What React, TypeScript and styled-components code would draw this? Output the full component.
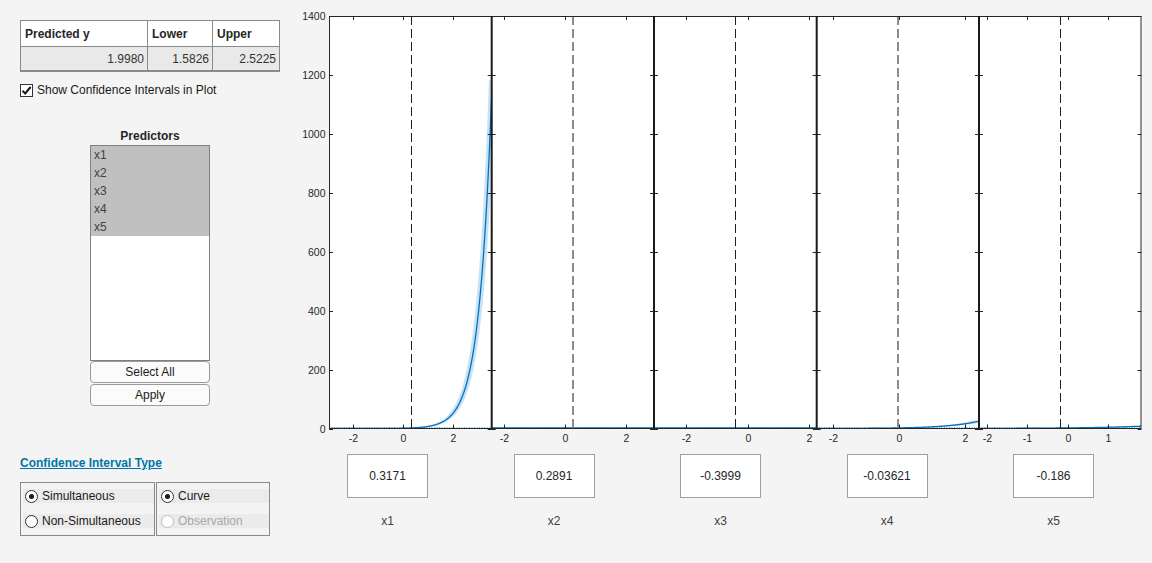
import React from 'react';
import styled, { createGlobalStyle } from 'styled-components';

const GlobalStyle = createGlobalStyle`
  html, body {
    margin: 0;
    padding: 0;
    background: #f4f4f4;
  }
  body {
    font-family: "Liberation Sans", Arial, sans-serif;
    font-size: 12px;
    color: #1a1a1a;
  }
`;

interface Panel {
  left: number;
  right: number;
  x0: number; // pixel of x = 0
  scale: number; // pixels per unit
  ticks: number[];
  dash: number;
  greyDash?: boolean;
  f: (x: number) => number;
}

const TOP = 16;
const BOTTOM = 428.5;
const YSCALE = (BOTTOM - TOP) / 1400;
const yPx = (v: number) => BOTTOM - v * YSCALE;

const panels: Panel[] = [
  { left: 329, right: 491.7, x0: 403, scale: 25, ticks: [-2, 0, 2], dash: 0.3171, f: (x) => 30 * Math.exp(2 * (x - 1.73)) },
  { left: 491.7, right: 654, x0: 564.5, scale: 30.5, ticks: [-2, 0, 2], dash: 0.2891, greyDash: true, f: () => 2 },
  { left: 654, right: 816.7, x0: 747.5, scale: 30.9, ticks: [-2, 0, 2], dash: -0.3999, f: () => 2 },
  { left: 816.7, right: 979, x0: 899, scale: 33, ticks: [-2, 0, 2], dash: -0.03621, greyDash: true, f: (x) => 2 * Math.exp(1.04 * x) },
  { left: 979, right: 1141.5, x0: 1067.7, scale: 40.5, ticks: [-2, -1, 0, 1], dash: -0.186, f: (x) => 2 * Math.exp(0.76 * x) },
];

const yTicks = [0, 200, 400, 600, 800, 1000, 1200, 1400];
const BAND = 1.3;

const samples = (p: Panel) => {
  const pts: number[] = [];
  for (let px = p.left; px <= p.right + 0.01; px += 0.5) pts.push(px);
  return pts;
};

const valueAt = (p: Panel, px: number) => p.f((px - p.x0) / p.scale);

const curvePath = (p: Panel) =>
  samples(p)
    .map((px, i) => `${i ? 'L' : 'M'}${px.toFixed(2)},${yPx(valueAt(p, px)).toFixed(2)}`)
    .join(' ');

const bandPath = (p: Panel) => {
  const pts = samples(p);
  const cap = valueAt(p, p.right) * 1.04;
  const up = pts.map((px, i) => `${i ? 'L' : 'M'}${px.toFixed(2)},${yPx(Math.min(valueAt(p, px) * BAND, cap)).toFixed(2)}`);
  const lo = [...pts].reverse().map((px) => `L${px.toFixed(2)},${yPx(valueAt(p, px) / BAND).toFixed(2)}`);
  return `${up.join(' ')} ${lo.join(' ')} Z`;
};

const SlicePlot = () => (
  <S.Plot width={862} height={450} viewBox="290 0 862 450">
    <defs>
      <clipPath id="plotClip">
        <rect x={329} y={TOP} width={1141.5 - 329} height={BOTTOM - TOP} />
      </clipPath>
    </defs>
    <rect x={329} y={TOP} width={1141.5 - 329} height={BOTTOM - TOP} fill="#fff" />
    <g clipPath="url(#plotClip)">
      {panels.map((p, i) => (
        <g key={i}>
          <path d={bandPath(p)} fill="#4d9be0" fillOpacity={0.3} stroke="none" />
          <path d={curvePath(p)} fill="none" stroke="#0072bd" strokeWidth={1.3} />
        </g>
      ))}
      <line x1={329} x2={1141.5} y1={yPx(1.998)} y2={yPx(1.998)} stroke="#0072bd" strokeWidth={1} strokeDasharray="1 1.5" />
    </g>
    {panels.map((p, i) => {
      const dx = Math.round(p.x0 + p.dash * p.scale) + (p.greyDash ? 0 : 0.5);
      return (
        <line
          key={`d${i}`}
          x1={dx}
          x2={dx}
          y1={TOP}
          y2={BOTTOM}
          stroke={p.greyDash ? '#8c8c8c' : '#1f1f1f'}
          strokeWidth={p.greyDash ? 2 : 1}
          strokeDasharray="9 4"
        />
      );
    })}
    {panels.map((p, i) =>
      p.ticks.map((t) => {
        const tx = Math.round(p.x0 + t * p.scale) + 0.5;
        return (
          <g key={`t${i}${t}`}>
            <line x1={tx} x2={tx} y1={TOP} y2={TOP + 4} stroke="#262626" />
            <line x1={tx} x2={tx} y1={BOTTOM} y2={BOTTOM - 4} stroke="#262626" />
            <S.Tick x={tx} y={441.5} textAnchor="middle">
              {t}
            </S.Tick>
          </g>
        );
      })
    )}
    {yTicks.map((v) => {
      const ty = Math.round(yPx(v)) + 0.5;
      return (
        <g key={`y${v}`}>
          <line x1={329} x2={333} y1={ty} y2={ty} stroke="#262626" />
          <line x1={1137.5} x2={1141.5} y1={ty} y2={ty} stroke="#262626" />
          {panels.slice(1).map((p, i) => (
            <line key={i} x1={p.left - 4} x2={p.left + 4} y1={ty} y2={ty} stroke="#262626" />
          ))}
          <S.Tick x={325.5} y={ty + 3.5} textAnchor="end">
            {v}
          </S.Tick>
        </g>
      );
    })}
    <rect x={329.5} y={16.5} width={1141 - 329.5} height={428.5 - 16.5} fill="none" stroke="#262626" strokeWidth={1} />
    {panels.slice(1).map((p, i) => (
      <line key={`b${i}`} x1={p.left} x2={p.left} y1={TOP} y2={BOTTOM} stroke="#1a1a1a" strokeWidth={2} />
    ))}
  </S.Plot>
);

const CheckMark = () => (
  <svg width="11" height="11" viewBox="0 0 11 11">
    <path d="M1.5 5.8 L4.2 8.5 L9.6 2" fill="none" stroke="#1a1a1a" strokeWidth={2} />
  </svg>
);

const Radio = ({ checked, disabled, label }: { checked?: boolean; disabled?: boolean; label: string }) => (
  <S.RadioRow $disabled={disabled}>
    <S.RadioCircle $disabled={disabled}>{checked && <S.RadioDot />}</S.RadioCircle>
    {label}
  </S.RadioRow>
);

const fields = [
  { value: '0.3171', name: 'x1' },
  { value: '0.2891', name: 'x2' },
  { value: '-0.3999', name: 'x3' },
  { value: '-0.03621', name: 'x4' },
  { value: '-0.186', name: 'x5' },
];

const App = () => {
  return (
    <>
      <GlobalStyle />
      <S.Page>
        <S.Side>
          <S.Table>
            <S.HeadCell>Predicted y</S.HeadCell>
            <S.HeadCell>Lower</S.HeadCell>
            <S.HeadCell $last>Upper</S.HeadCell>
            <S.DataCell>1.9980</S.DataCell>
            <S.DataCell>1.5826</S.DataCell>
            <S.DataCell $last>2.5225</S.DataCell>
          </S.Table>
          <S.CheckRow>
            <S.CheckBox>
              <CheckMark />
            </S.CheckBox>
            Show Confidence Intervals in Plot
          </S.CheckRow>
          <S.Predictors>
            <S.PredTitle>Predictors</S.PredTitle>
            <S.List>
              {['x1', 'x2', 'x3', 'x4', 'x5'].map((n) => (
                <S.ListItem key={n}>{n}</S.ListItem>
              ))}
            </S.List>
            <S.Button>Select All</S.Button>
            <S.Button $gap>Apply</S.Button>
          </S.Predictors>
          <S.Link>Confidence Interval Type</S.Link>
          <S.RadioGroups>
            <S.RadioBox $width={135}>
              <Radio checked label="Simultaneous" />
              <Radio label="Non-Simultaneous" />
            </S.RadioBox>
            <S.RadioBox $width={114}>
              <Radio checked label="Curve" />
              <Radio disabled label="Observation" />
            </S.RadioBox>
          </S.RadioGroups>
        </S.Side>
        <S.Main>
          <SlicePlot />
          <S.FieldRow>
            {fields.map((f) => (
              <S.Field key={f.name}>
                <S.ValueBox>{f.value}</S.ValueBox>
                <S.FieldLabel>{f.name}</S.FieldLabel>
              </S.Field>
            ))}
          </S.FieldRow>
        </S.Main>
      </S.Page>
    </>
  );
};

export default App;

const S = {
  Page: styled.div`
    width: 1152px;
    height: 563px;
    display: flex;
    background: #f4f4f4;
    overflow: hidden;
  `,
  Side: styled.div`
    width: 270px;
    padding: 20px 0 0 20px;
    display: flex;
    flex-direction: column;
  `,
  Table: styled.div`
    width: 258px;
    display: grid;
    grid-template-columns: 127px 65px 1fr;
    grid-template-rows: 26px 23px;
    border: 1px solid #8a8a8a;
    border-bottom: 2px solid #8a8a8a;
  `,
  HeadCell: styled.div<{ $last?: boolean }>`
    display: flex;
    align-items: center;
    padding-left: 4px;
    background: #fff;
    font-weight: bold;
    color: #262626;
    border-right: ${(p) => (p.$last ? 'none' : '1px solid #8a8a8a')};
    border-bottom: 1px solid #8a8a8a;
  `,
  DataCell: styled.div<{ $last?: boolean }>`
    display: flex;
    align-items: center;
    justify-content: flex-end;
    padding-right: 3px;
    background: #e9e9e9;
    color: #333;
    border-right: ${(p) => (p.$last ? 'none' : '1px solid #8a8a8a')};
  `,
  CheckRow: styled.div`
    margin-top: 11px;
    display: flex;
    align-items: center;
    gap: 4px;
    height: 14px;
    color: #1a1a1a;
  `,
  CheckBox: styled.div`
    width: 11px;
    height: 11px;
    border: 1px solid #333;
    background: #fff;
    display: flex;
    align-items: center;
    justify-content: center;
  `,
  Predictors: styled.div`
    margin-top: 32px;
    width: 260px;
    display: flex;
    flex-direction: column;
    align-items: center;
  `,
  PredTitle: styled.div`
    font-weight: bold;
    line-height: 14px;
    color: #262626;
    margin-bottom: 2px;
  `,
  List: styled.div`
    width: 118px;
    height: 214px;
    border: 1px solid #808080;
    background: #fff;
    display: flex;
    flex-direction: column;
  `,
  ListItem: styled.div`
    height: 18px;
    line-height: 18px;
    padding-left: 3px;
    background: #c0c0c0;
    color: #404040;
  `,
  Button: styled.div<{ $gap?: boolean }>`
    width: 118px;
    height: 20px;
    margin-top: ${(p) => (p.$gap ? '1px' : '0')};
    border: 1px solid #9a9a9a;
    border-radius: 4px;
    background: #fbfbfb;
    display: flex;
    align-items: center;
    justify-content: center;
    color: #1a1a1a;
  `,
  Link: styled.div`
    margin-top: 50px;
    font-weight: bold;
    color: #0076a8;
    text-decoration: underline;
    line-height: 14px;
  `,
  RadioGroups: styled.div`
    margin-top: 12px;
    display: flex;
    gap: 1px;
  `,
  RadioBox: styled.div<{ $width: number }>`
    width: ${(p) => p.$width}px;
    height: 54px;
    border: 1px solid #8a8a8a;
    padding: 6px 0 0 2px;
    box-sizing: border-box;
    display: flex;
    flex-direction: column;
    gap: 11px;
  `,
  RadioRow: styled.div<{ $disabled?: boolean }>`
    height: 14px;
    display: flex;
    align-items: center;
    gap: 4px;
    padding-left: 2px;
    background: #ebebeb;
    color: ${(p) => (p.$disabled ? '#a8a8a8' : '#1a1a1a')};
  `,
  RadioCircle: styled.div<{ $disabled?: boolean }>`
    width: 11px;
    height: 11px;
    border-radius: 50%;
    border: 1px solid ${(p) => (p.$disabled ? '#bdbdbd' : '#333')};
    background: #fff;
    display: flex;
    align-items: center;
    justify-content: center;
  `,
  RadioDot: styled.div`
    width: 5px;
    height: 5px;
    border-radius: 50%;
    background: #1a1a1a;
  `,
  Main: styled.div`
    flex: 1;
    display: flex;
    flex-direction: column;
  `,
  Plot: styled.svg`
    display: block;
  `,
  Tick: styled.text`
    font-family: "Liberation Sans", Arial, sans-serif;
    font-size: 10.5px;
    fill: #262626;
  `,
  FieldRow: styled.div`
    margin-top: 4px;
    padding-left: 57px;
    display: flex;
    gap: 85.5px;
  `,
  Field: styled.div`
    width: 81px;
    display: flex;
    flex-direction: column;
    align-items: center;
  `,
  ValueBox: styled.div`
    width: 79px;
    height: 42px;
    border: 1px solid #a0a0a0;
    background: #fff;
    display: flex;
    align-items: center;
    justify-content: center;
    color: #262626;
  `,
  FieldLabel: styled.div`
    margin-top: 16px;
    line-height: 14px;
    color: #404040;
  `,
};
